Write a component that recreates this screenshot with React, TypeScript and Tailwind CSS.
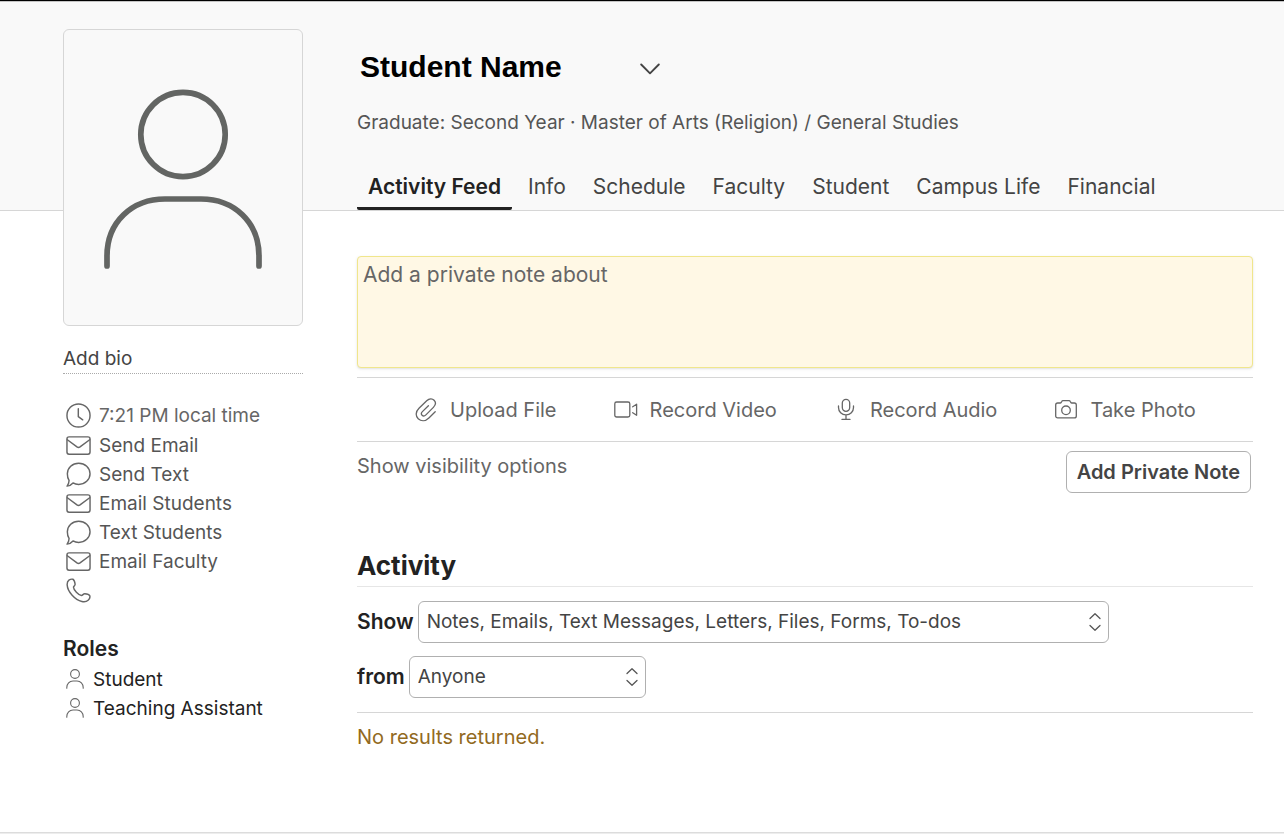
import { useState } from "react"
import type { ReactNode } from "react"

interface IconProps {
  className?: string
}

const ClockIcon = ({ className }: IconProps) => (
  <svg viewBox="0 0 26 26" fill="none" stroke="currentColor" strokeWidth="1.5" strokeLinecap="round" strokeLinejoin="round" className={className}>
    <circle cx="13" cy="13" r="12" />
    <path d="M12.800 6v8.200l4.600 3.300" />
  </svg>
)

const MailIcon = ({ className }: IconProps) => (
  <svg viewBox="0 0 26 26" fill="none" stroke="currentColor" strokeWidth="1.5" strokeLinecap="round" strokeLinejoin="round" className={className}>
    <rect x="1" y="4" width="24" height="18" rx="2.200" />
    <path d="M1.400 7l10 7.500q1.600 1.100 3.200 0L24.600 7" />
  </svg>
)

const ChatIcon = ({ className }: IconProps) => (
  <svg viewBox="0 0 26 26" fill="none" stroke="currentColor" strokeWidth="1.5" strokeLinecap="round" strokeLinejoin="round" className={className}>
    <path d="M13.200 1.300c6.500 0 11.800 4.900 11.800 11s-5.300 11-11.800 11c-2.200 0-4.200-.5-5.900-1.500-1.700 1.900-3.800 3.100-6.200 3.300 1.300-1.500 2-3.600 2.100-5.900C1.800 17.300 1.400 15 1.400 12.300c0-6.100 5.300-11 11.800-11z" />
  </svg>
)

const PhoneIcon = ({ className }: IconProps) => (
  <svg viewBox="0 0 26 26" fill="none" stroke="currentColor" strokeWidth="1.5" strokeLinecap="round" strokeLinejoin="round" className={className}>
    <path d="M3 2.300C4.300 1.400 6.200 1 7.200 1.300c1 .5 2.100 3.700 2.300 5.200.1 1.300-1.600 2-1.700 3-.2 2.600 5.400 8.500 8.300 8.700 1.300 0 1.900-2 3.400-1.900 1.800.2 4.700 1.100 5.200 2.100.4 1.200-.4 3.600-1.700 4.700-1.400 1.300-3.600 1.900-6.500 1.300C9.400 22.800 1.700 14.600 1.200 7.200 1.100 5 1.700 3.200 3 2.300z" />
  </svg>
)

const PersonIcon = ({ className }: IconProps) => (
  <svg viewBox="0 0 18 20" fill="none" stroke="currentColor" strokeWidth="1.100" strokeLinecap="round" className={className}>
    <circle cx="9" cy="5" r="4.400" />
    <path d="M.8 19.300v-.8c0-3.800 2.700-6.500 6.200-6.500h4c3.500 0 6.200 2.700 6.200 6.500v.8" />
  </svg>
)

const PaperclipIcon = ({ className }: IconProps) => (
  <svg viewBox="0 0 24 24" fill="none" stroke="currentColor" strokeWidth="1.300" strokeLinecap="round" strokeLinejoin="round" className={className}>
    <path d="M21.200 13.800l-6.300 6.200c-3.500 3.400-7.800 3.400-10.700.7s-2.600-7 .8-10.400L12.700 2.800c2.500-2.300 5.600-2.400 7.400-.5s1.700 4.700-.7 7.100l-7.500 7.500c-1.300 1.300-2.800 1.400-3.800.4s-.9-2.500.3-3.700l6-5.900" />
  </svg>
)

const VideoIcon = ({ className }: IconProps) => (
  <svg viewBox="0 0 24 24" fill="none" stroke="currentColor" strokeWidth="1.300" strokeLinecap="round" strokeLinejoin="round" className={className}>
    <rect x=".8" y="4" width="15" height="15" rx="1.800" />
    <path d="M18.700 8.800l3.900-2.600v11.100l-3.900-2.600" />
  </svg>
)

const MicIcon = ({ className }: IconProps) => (
  <svg viewBox="0 0 24 24" fill="none" stroke="currentColor" strokeWidth="1.300" strokeLinecap="round" strokeLinejoin="round" className={className}>
    <rect x="8.300" y="1.300" width="7.400" height="12" rx="3.700" />
    <path d="M4.500 8v1.500c0 4.200 3.200 7.300 7.500 7.300s7.500-3.100 7.500-7.300V8M12 16.800v4.500M8 21.400h8" />
  </svg>
)

const CameraIcon = ({ className }: IconProps) => (
  <svg viewBox="0 0 24 24" fill="none" stroke="currentColor" strokeWidth="1.300" strokeLinecap="round" strokeLinejoin="round" className={className}>
    <path d="M3.700 5h2.500c.5 0 .8-.2 1-.6l.5-.9c.3-.6.700-.9 1.300-.9h6c.6 0 1 .3 1.300.9l.5.9c.2.4.5.6 1 .6h2.500c1.200 0 2 .8 2 2v10.900c0 1.200-.8 2-2 2H3.700c-1.200 0-2-.8-2-2V7c0-1.200.8-2 2-2z" />
    <circle cx="12" cy="12.300" r="4.300" />
  </svg>
)

const AvatarIcon = ({ className }: IconProps) => (
  <svg viewBox="0 0 160 182" fill="none" stroke="currentColor" strokeWidth="5.700" strokeLinecap="round" className={className}>
    <circle cx="80" cy="46.500" r="42.200" />
    <path d="M4 178v-10c0-34 25-57 58-57h36c33 0 58 23 58 57v10" />
  </svg>
)

const tabs = ["Activity Feed", "Info", "Schedule", "Faculty", "Student", "Campus Life", "Financial"]

const contactLinks = [
  { label: "Send Email", icon: MailIcon },
  { label: "Send Text", icon: ChatIcon },
  { label: "Email Students", icon: MailIcon },
  { label: "Text Students", icon: ChatIcon },
  { label: "Email Faculty", icon: MailIcon },
]

const roles = ["Student", "Teaching Assistant"]

const attachments = [
  { label: "Upload File", icon: PaperclipIcon },
  { label: "Record Video", icon: VideoIcon },
  { label: "Record Audio", icon: MicIcon },
  { label: "Take Photo", icon: CameraIcon },
]

interface SelectBoxProps {
  id: string
  className: string
  children: ReactNode
}

function SelectBox({ id, className, children }: SelectBoxProps) {
  return (
    <div className={`relative ${className}`}>
      <select
        id={id}
        className="block h-[42px] w-full appearance-none rounded-md border border-[#b0b0b0] bg-white pr-8 pl-2 text-[19px] text-[#444]"
      >
        {children}
      </select>
      <svg
        viewBox="0 0 12 20"
        fill="none"
        stroke="#555"
        strokeWidth="1.300"
        strokeLinecap="round"
        strokeLinejoin="round"
        className="pointer-events-none absolute top-[11px] right-2 h-5 w-3"
      >
        <path d="M1 6.500l5-4.700 5 4.700M1 13.500l5 4.700 5-4.700" />
      </svg>
    </div>
  )
}

export default function App() {
  const [activeTab, setActiveTab] = useState("Activity Feed")
  const [note, setNote] = useState("")

  return (
    <div className="flex min-h-screen flex-col bg-white font-['Inter',sans-serif] text-[19px] text-[#555]">
      {/* Header */}
      <header className="border-t border-b border-t-black border-b-[#d6d6d6] bg-[#f9f9f9]">
        <div className="border-t border-[#c4c4c4] pr-[31px] pl-[357px]">
          <div className="flex items-center gap-[78px] pt-[42px] pl-[3px]">
            <h1 className="font-['Liberation_Sans',sans-serif] text-[30px] leading-[46px] font-bold text-black">Student Name</h1>
            <button aria-label="Switch student">
              <svg viewBox="0 0 20 12" fill="none" stroke="#444" strokeWidth="1.900" strokeLinecap="round" strokeLinejoin="round" className="mt-1 h-3 w-5">
                <path d="M1.200 1.500l8.800 8.800 8.800-8.800" />
              </svg>
            </button>
          </div>
          <p className="pt-[19px] leading-7">Graduate: Second Year · Master of Arts (Religion) / General Studies</p>
          <nav className="flex gap-[5px] pt-[30px] text-[21px] text-[#444]">
            {tabs.map((tab) => (
              <button
                key={tab}
                onClick={() => setActiveTab(tab)}
                className={
                  tab === activeTab
                    ? "rounded-xs border-b-3 border-[#222] px-[11px] py-1 leading-8 font-semibold text-[#222]"
                    : "border-b-3 border-transparent px-[11px] py-1 leading-8"
                }
              >
                {tab}
              </button>
            ))}
          </nav>
        </div>
      </header>

      <div className="flex grow gap-[54px] pr-[31px] pl-[63px]">
        {/* Sidebar */}
        <aside className="relative -mt-[182px] w-60 shrink-0">
          <div className="flex h-[297px] justify-center rounded-md border border-[#d6d6d6] bg-[#f9f9f9] pt-[58px]">
            <AvatarIcon className="h-[182px] w-40 text-[#636563]" />
          </div>
          <a href="#bio" className="block border-b border-dotted border-[#aaa] pt-[18px] text-[#444] leading-[29px]">
            Add bio
          </a>
          <ul className="pt-[27px] pl-[3px] leading-[29px]">
            <li className="flex items-center gap-2 pb-px text-[#666]">
              <ClockIcon className="mb-px size-[25px]" />
              7:21 PM local time
            </li>
            {contactLinks.map(({ label, icon: Icon }) => (
              <li key={label}>
                <a href="#contact" className="flex items-center gap-2">
                  <Icon className="mb-px size-[25px] text-[#666]" />
                  {label}
                </a>
              </li>
            ))}
            <li>
              <a href="#call" aria-label="Call" className="flex h-[29px] items-center">
                <PhoneIcon className="size-[25px] text-[#666]" />
              </a>
            </li>
          </ul>
          <h2 className="pt-7 text-[21px] leading-8 font-semibold text-[#222]">Roles</h2>
          <ul className="pl-[3px] leading-[29px] text-[#222]">
            {roles.map((role) => (
              <li key={role} className="flex items-center gap-[9px]">
                <PersonIcon className="mb-px h-5 w-[18px] text-[#666]" />
                {role}
              </li>
            ))}
          </ul>
        </aside>

        {/* Main column */}
        <main className="min-w-0 grow pt-[45px]">
          <textarea
            aria-label="Private note"
            placeholder="Add a private note about"
            value={note}
            onChange={(e) => setNote(e.target.value)}
            className="block h-28 w-full resize-none rounded-sm border border-[#f0e68c] bg-[#fff8e5] px-[5px] py-1 text-[21px] leading-7 text-[#444] shadow-sm placeholder:text-[#666]"
          />
          <div className="mt-[9px] flex h-[65px] items-center justify-evenly border-y border-[#d6d6d6] text-[20px] text-[#666]">
            {attachments.map(({ label, icon: Icon }) => (
              <button key={label} className="flex items-center gap-3">
                <Icon className="size-6" />
                {label}
              </button>
            ))}
          </div>
          <div className="flex items-start justify-between pt-[9px] pr-[2px] text-[20px]">
            <button className="leading-[30px] text-[#666]">Show visibility options</button>
            <button className="h-[42px] rounded-md border border-[#b0b0b0] bg-white px-[10px] font-semibold text-[#444]">
              Add Private Note
            </button>
          </div>

          <h2 className="mt-[52px] border-b border-[#e6e6e6] text-[26px] leading-[41px] font-bold text-[#222]">Activity</h2>
          <div className="flex items-center gap-1 pt-[14px]">
            <label htmlFor="show" className="text-[21px] font-semibold text-[#222]">Show</label>
            <SelectBox id="show" className="w-[691px]">
              <option>Notes, Emails, Text Messages, Letters, Files, Forms, To-dos</option>
            </SelectBox>
          </div>
          <div className="flex items-center gap-1 border-b border-[#d6d6d6] pt-[13px] pb-[14px]">
            <label htmlFor="from" className="text-[21px] font-semibold text-[#222]">from</label>
            <SelectBox id="from" className="w-[237px]">
              <option>Anyone</option>
            </SelectBox>
          </div>
          <p className="pt-2 text-[20px] leading-8 text-[#926a1e]">No results returned.</p>
        </main>
      </div>

      <footer className="h-[2px] border-t border-[#dcdcdc] bg-[#ededed]" />
    </div>
  )
}
